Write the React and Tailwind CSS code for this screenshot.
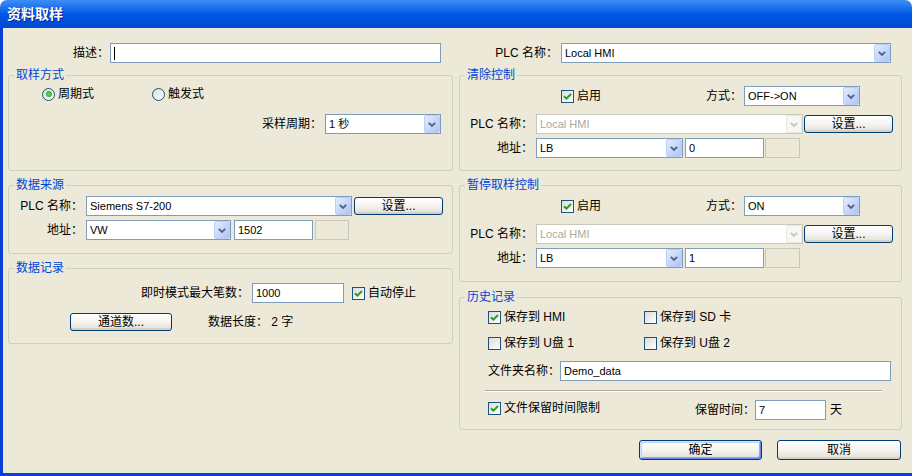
import React from "react";

const Chevron = ({ disabled }) => (
  <svg width="8" height="5" viewBox="0 0 8 5">
    <path
      d="M0.8 0.8 L4 4 L7.2 0.8"
      fill="none"
      stroke={disabled ? "#C9C7BA" : "#4D6185"}
      strokeWidth="1.8"
    />
  </svg>
);

const Combo = ({ className = "", value, disabled }) => (
  <div
    className={`flex h-[20px] items-stretch border bg-white ${
      disabled ? "border-[#C9C7BA]" : "border-[#7F9DB9]"
    } ${className}`}
  >
    <span
      className={`flex flex-1 items-center truncate pl-[3px] text-[11px] ${
        disabled ? "text-[#ACA899]" : "text-black"
      }`}
    >
      {value}
    </span>
    <span
      className={`flex w-[16px] items-center justify-center rounded-[2px] border ${
        disabled
          ? "border-[#E8E8E1] bg-[#F7F7F4]"
          : "border-[#B9CFF9] bg-linear-to-br from-[#E3ECFE] to-[#AFC4F5]"
      }`}
    >
      <Chevron disabled={disabled} />
    </span>
  </div>
);

const Input = ({ className = "", value, caret }) => (
  <div
    className={`flex h-[20px] items-center border border-[#7F9DB9] bg-white pl-[3px] text-[11px] ${className}`}
  >
    {caret && <span className="h-[13px] w-px bg-black" />}
    {value}
  </div>
);

const GrayBox = ({ className = "" }) => (
  <div className={`h-[20px] border border-[#CAC8BB] bg-[#ECE9D8] ${className}`} />
);

const XpButton = ({ className = "", children, primary }) => (
  <button
    className={`flex items-center justify-center rounded-[3px] border border-[#003C74] bg-linear-to-b from-white via-[#F5F4EF] to-[#E0DDD3] ${
      primary
        ? "shadow-[inset_1px_1px_0_#CEE7FF,inset_-1px_-1px_0_#6982EE,inset_2px_2px_0_#BCD4F6,inset_-2px_-2px_0_#89ADE4]"
        : "shadow-[inset_0_-2px_0_#D6D0C5]"
    } ${className}`}
  >
    {children}
  </button>
);

const Check = ({ checked }) => (
  <span className="flex h-[13px] w-[13px] shrink-0 items-center justify-center border border-[#1C5180] bg-linear-to-br from-[#DCDCD7] to-white">
    {checked && (
      <svg width="9" height="9" viewBox="0 0 9 9">
        <path d="M1 4.2 L3.4 6.6 L8 2" fill="none" stroke="#21A121" strokeWidth="2" />
      </svg>
    )}
  </span>
);

const Radio = ({ checked }) => (
  <span className="flex h-[13px] w-[13px] shrink-0 items-center justify-center rounded-full border border-[#1C5180] bg-linear-to-br from-[#DCDCD7] to-white">
    {checked && (
      <span className="h-[6px] w-[6px] rounded-full bg-radial from-[#5EDC5A] to-[#1A9F1A]" />
    )}
  </span>
);

const Group = ({ title, className = "", children }) => (
  <fieldset className={`rounded-[3px] border border-[#D0D0BF] ${className}`}>
    <legend className="ml-[5px] px-[2px] leading-[14px] text-[#0046D5]">
      {title}
    </legend>
    {children}
  </fieldset>
);

const ControlBlock = ({ title, mode, addr, className }) => (
  <Group title={title} className={className}>
    <div className="mt-[4px] flex h-[20px] items-center">
      <div className="ml-[101px] flex w-[145px] items-center gap-[3px]">
        <Check checked />
        <span>启用</span>
      </div>
      <span className="w-[38px]">方式：</span>
      <Combo className="w-[116px]" value={mode} />
    </div>
    <div className="mt-[8px] flex h-[20px] items-center">
      <span className="w-[76px] pr-[3px] text-right">PLC 名称：</span>
      <Combo className="w-[267px]" value="Local HMI" disabled />
      <XpButton className="ml-[1px] h-[18px] w-[89px]">设置...</XpButton>
    </div>
    <div className="mt-[4px] flex h-[20px] items-center">
      <span className="w-[76px] pr-[3px] text-right">地址：</span>
      <Combo className="w-[147px]" value="LB" />
      <Input className="ml-[2px] w-[79px]" value={addr} />
      <GrayBox className="ml-[1px] w-[35px]" />
    </div>
  </Group>
);

export default function App() {
  return (
    <div className="flex h-[476px] w-[912px] flex-col overflow-hidden bg-white font-['Liberation_Sans','Noto_Sans_CJK_SC',sans-serif] text-[12px] leading-[14px] text-black">
      <div className="flex h-[28px] shrink-0 items-center rounded-t-[7px] bg-linear-to-b from-[#3D8DF5] via-[#0058E6] to-[#0048D0] pl-[7px]">
        <span className="text-[14px] font-bold text-white [text-shadow:1px_1px_0_#0A1E8C]">
          资料取样
        </span>
      </div>
      <div className="flex flex-1 gap-[6px] border-b-[3px] border-l-[3px] border-[#0A3FD8] bg-[#ECE9D8] pl-[5px]">
        {/* left column */}
        <div className="flex w-[445px] flex-col">
          <div className="mt-[15px] flex h-[20px] items-center">
            <span className="w-[102px] pr-[1px] text-right">描述：</span>
            <Input className="w-[331px]" caret />
          </div>

          <Group title="取样方式" className="mt-[5px] h-[103px]">
            <div className="ml-[33px] mt-[5px] flex h-[14px] items-center">
              <div className="flex w-[110px] items-center gap-[3px]">
                <Radio checked />
                <span>周期式</span>
              </div>
              <div className="flex items-center gap-[3px]">
                <Radio />
                <span>触发式</span>
              </div>
            </div>
            <div className="mt-[13px] flex h-[20px] items-center justify-end pr-[11px]">
              <span className="pr-[3px]">采样周期：</span>
              <Combo className="w-[116px]" value="1 秒" />
            </div>
          </Group>

          <Group title="数据来源" className="mt-[7px] h-[76px]">
            <div className="mt-[4px] flex h-[20px] items-center">
              <span className="w-[77px] pr-[3px] text-right">PLC 名称：</span>
              <Combo className="w-[266px]" value="Siemens S7-200" />
              <XpButton className="ml-[2px] h-[18px] w-[89px]">设置...</XpButton>
            </div>
            <div className="mt-[4px] flex h-[20px] items-center">
              <span className="w-[77px] pr-[3px] text-right">地址：</span>
              <Combo className="w-[145px]" value="VW" />
              <Input className="ml-[3px] w-[79px]" value="1502" />
              <GrayBox className="ml-[2px] w-[34px]" />
            </div>
          </Group>

          <Group title="数据记录" className="mt-[7px] h-[83px]">
            <div className="mt-[8px] flex h-[20px] items-center">
              <span className="w-[243px] pr-[3px] text-right">即时模式最大笔数：</span>
              <Input className="w-[92px]" value="1000" />
              <div className="ml-[8px] flex items-center gap-[3px]">
                <Check checked />
                <span>自动停止</span>
              </div>
            </div>
            <div className="mt-[10px] flex h-[18px] items-center">
              <XpButton className="ml-[61px] h-[18px] w-[102px]">通道数...</XpButton>
              <span className="ml-[36px]">数据长度： 2 字</span>
            </div>
          </Group>
        </div>

        {/* right column */}
        <div className="flex w-[443px] flex-col">
          <div className="mt-[15px] flex h-[20px] items-center">
            <span className="w-[102px] pr-[3px] text-right">PLC 名称：</span>
            <Combo className="w-[330px]" value="Local HMI" />
          </div>

          <ControlBlock title="清除控制" mode="OFF->ON" addr="0" className="mt-[5px] h-[103px]" />
          <ControlBlock title="暂停取样控制" mode="ON" addr="1" className="mt-[7px] h-[104px]" />

          <Group title="历史记录" className="mt-[8px] h-[140px]">
            <div className="ml-[28px] mt-[6px] flex h-[14px] items-center">
              <div className="flex w-[156px] items-center gap-[3px]">
                <Check checked />
                <span>保存到 HMI</span>
              </div>
              <div className="flex items-center gap-[3px]">
                <Check />
                <span>保存到 SD 卡</span>
              </div>
            </div>
            <div className="ml-[28px] mt-[12px] flex h-[14px] items-center">
              <div className="flex w-[156px] items-center gap-[3px]">
                <Check />
                <span>保存到 U盘 1</span>
              </div>
              <div className="flex items-center gap-[3px]">
                <Check />
                <span>保存到 U盘 2</span>
              </div>
            </div>
            <div className="ml-[28px] mt-[11px] flex h-[20px] items-center">
              <span className="w-[72px]">文件夹名称：</span>
              <Input className="w-[331px]" value="Demo_data" />
            </div>
            <div className="ml-[25px] mt-[9px] h-[2px] w-[397px] border-t border-b border-t-[#ACA899] border-b-white" />
            <div className="ml-[28px] mt-[8px] flex h-[20px] items-center">
              <div className="flex w-[207px] items-center gap-[3px] self-start pt-[1px]">
                <Check checked />
                <span>文件保留时间限制</span>
              </div>
              <span className="w-[60px]">保留时间：</span>
              <Input className="w-[71px]" value="7" />
              <span className="ml-[4px]">天</span>
            </div>
          </Group>

          <div className="ml-[180px] mt-[10px] flex gap-[15px]">
            <XpButton primary className="h-[20px] w-[123px]">确定</XpButton>
            <XpButton className="h-[20px] w-[124px]">取消</XpButton>
          </div>
        </div>
      </div>
    </div>
  );
}
